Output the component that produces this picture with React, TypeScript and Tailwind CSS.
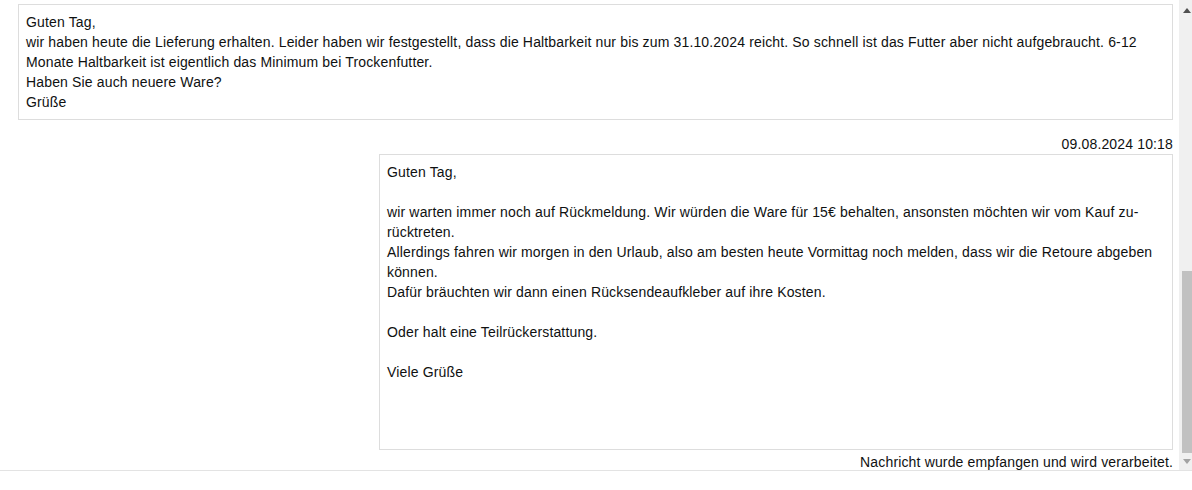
import React from "react";

const font = { fontFamily: '"Liberation Sans", Arial, sans-serif' };

export default function App() {
  const box1 = [
    "Guten Tag,",
    "wir haben heute die Lieferung erhalten. Leider haben wir festgestellt, dass die Haltbarkeit nur bis zum 31.10.2024 reicht. So schnell ist das Futter aber nicht aufgebraucht. 6-12",
    "Monate Haltbarkeit ist eigentlich das Minimum bei Trockenfutter.",
    "Haben Sie auch neuere Ware?",
    "Grüße",
  ];
  const box2 = [
    "Guten Tag,",
    "",
    "wir warten immer noch auf Rückmeldung. Wir würden die Ware für 15€ behalten, ansonsten möchten wir vom Kauf zu-",
    "rücktreten.",
    "Allerdings fahren wir morgen in den Urlaub, also am besten heute Vormittag noch melden, dass wir die Retoure abgeben",
    "können.",
    "Dafür bräuchten wir dann einen Rücksendeaufkleber auf ihre Kosten.",
    "",
    "Oder halt eine Teilrückerstattung.",
    "",
    "Viele Grüße",
  ];
  return (
    <div className="w-[1192px] h-[490px] bg-white text-[#0f1111] text-[14px] leading-[20px] tracking-[0.15px]" style={font}>
      <div className="h-[471px] border-b border-[#e3e3e3] flex overflow-hidden">
        <div className="flex-1 flex flex-col pt-[4px] pl-[18px] pr-[6px] overflow-hidden">
          <div className="shrink-0 border border-[#dddddd] pt-[7px] pb-[7px] pl-[7px]">
            {box1.map((l, i) => (
              <div key={i} className="whitespace-nowrap h-[20px]">{l}</div>
            ))}
          </div>
          <div className="shrink-0 mt-[14px] text-right h-[20px]">09.08.2024 10:18</div>
          <div className="shrink-0 ml-auto w-[794px] h-[296px] border border-[#dddddd] pt-[7px] pl-[7px]">
            {box2.map((l, i) => (
              <div key={i} className="whitespace-nowrap h-[20px]">{l}</div>
            ))}
          </div>
          <div className="shrink-0 pt-[2px] text-right h-[20px]">Nachricht wurde empfangen und wird verarbeitet.</div>
        </div>
        <div className="w-[13px] bg-[#f0f0f0] flex flex-col items-end">
          <div className="h-[20px] w-[10px] flex items-center justify-center">
            <svg width="8" height="5" viewBox="0 0 8 5"><path d="M0 5 L4 0 L8 5 Z" fill="#505050" /></svg>
          </div>
          <div className="h-[251px]" />
          <div className="w-[10px] h-[182px] bg-[#c1c1c1]" />
          <div className="flex-1 w-[10px] flex items-center justify-center">
            <svg width="8" height="5" viewBox="0 0 8 5"><path d="M0 0 L8 0 L4 5 Z" fill="#a3a3a3" /></svg>
          </div>
        </div>
      </div>
    </div>
  );
}
